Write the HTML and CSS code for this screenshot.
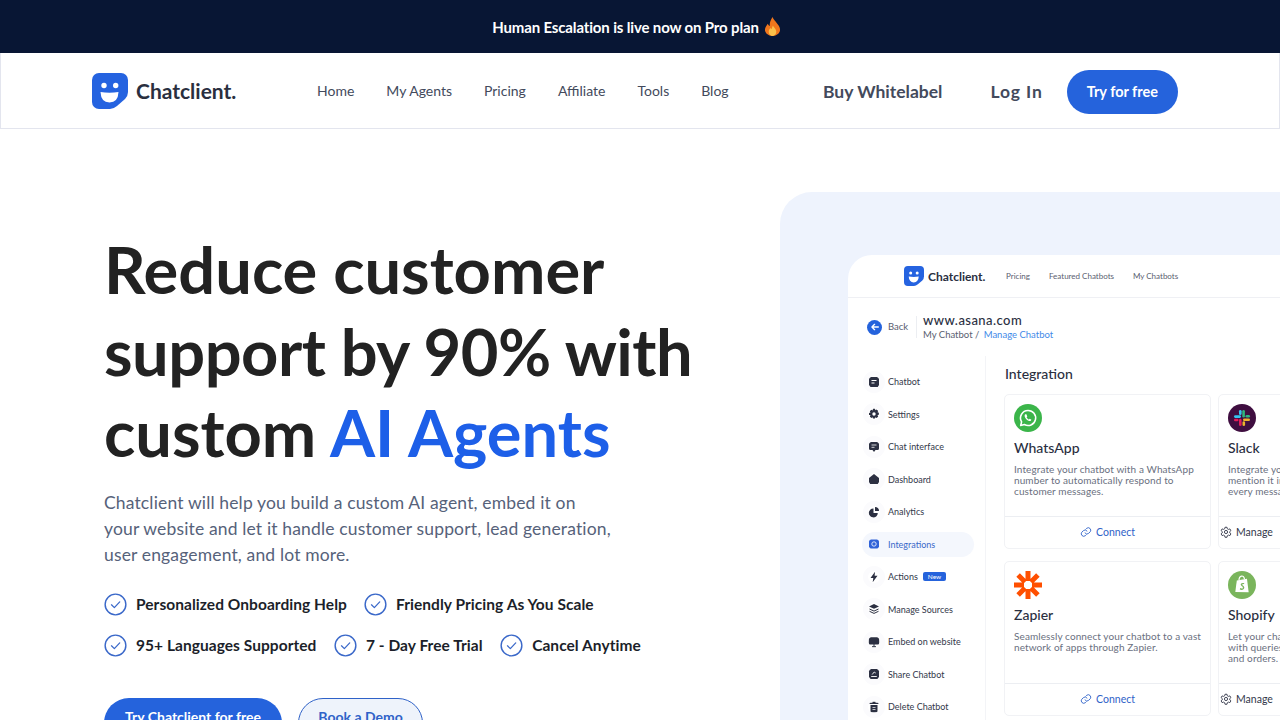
FILE: index.html
```html
<!DOCTYPE html>
<html lang="en">
<head>
    <meta charset="UTF-8">
    <meta name="viewport" content="width=device-width, initial-scale=1.0">
    <title>Chatclient</title>
    <link rel="stylesheet" href="styles.css">
</head>
<body>
    <svg class="sprite" width="0" height="0">
        <symbol id="logo" viewBox="0 0 36 36">
            <path fill="#2563e0" d="M7 0H29a7 7 0 0 1 7 7V19Q36 23 33 26L25 33Q21.500 36 18 36H7a7 7 0 0 1-7-7V7a7 7 0 0 1 7-7z"/>
            <circle cx="12" cy="12.500" r="2.700" fill="#fff"/>
            <circle cx="23.700" cy="12.500" r="2.700" fill="#fff"/>
            <path fill="#fff" d="M8.500 19Q17.500 20.500 26.500 19Q26 29.500 17.500 29.500Q9 29.500 8.500 19z"/>
        </symbol>
        <symbol id="check" viewBox="0 0 24 24">
            <circle cx="12" cy="12" r="10.800" fill="none" stroke="#3a68c9" stroke-width="1.500"/>
            <path d="M7.800 12.300l3 3 5.600-6" fill="none" stroke="#3a68c9" stroke-width="1.300" stroke-linecap="round" stroke-linejoin="round"/>
        </symbol>
        <symbol id="link" viewBox="0 0 24 24">
            <path d="M10 14a5 5 0 0 0 7.500.5l3-3a5 5 0 0 0-7-7l-1.700 1.700M14 10a5 5 0 0 0-7.500-.5l-3 3a5 5 0 0 0 7 7l1.700-1.700" fill="none" stroke="#2f62c8" stroke-width="1.800" stroke-linecap="round"/>
        </symbol>
        <symbol id="gear" viewBox="0 0 24 24">
            <circle cx="12" cy="12" r="3.200" fill="none" stroke="#33384a" stroke-width="1.800"/>
            <path d="M10 2.500h4l.6 3 2.300 1.300 2.900-1 2 3.400-2.300 2v2.600l2.300 2-2 3.400-2.900-1-2.300 1.300-.6 3h-4l-.6-3-2.300-1.300-2.900 1-2-3.400 2.300-2v-2.600l-2.300-2 2-3.400 2.900 1 2.300-1.300z" fill="none" stroke="#33384a" stroke-width="1.800" stroke-linejoin="round"/>
        </symbol>
    </svg>

    <div class="announce">
        Human Escalation is live now on Pro plan
        <svg class="fire" viewBox="0 0 18 20" width="17" height="19">
            <path fill="#f0761c" d="M9 0c1 3 3 4 5 7 2 2 3 4 3 6.500C17 17 13.500 20 9 20s-8-3-8-6.500C1 10.500 3 9 4 7c.5 1 1 2 2 2.500C6 6 7 3 9 0z"/>
            <path fill="#fbc14a" d="M9.500 9c.5 2 3.500 3.500 3.500 6.500 0 2.500-2 4.500-4 4.500s-4-2-4-4.500c0-2 1-3 2-4 .3.700.7 1 1.200 1.200C8.500 11 9 10 9.500 9z"/>
        </svg>
    </div>

    <header class="navbar">
        <a class="brand">
            <svg class="brand-logo"><use href="#logo"/></svg>
            <span>Chatclient.</span>
        </a>
        <nav class="nav-links">
            <a>Home</a>
            <a>My Agents</a>
            <a>Pricing</a>
            <a>Affiliate</a>
            <a>Tools</a>
            <a>Blog</a>
        </nav>
        <div class="nav-right">
            <a class="whitelabel">Buy Whitelabel</a>
            <a class="login">Log In</a>
            <a class="try-btn">Try for free</a>
        </div>
    </header>

    <main class="hero">
        <section class="hero-left">
            <h1>Reduce customer<br><span class="tight">support by 90% with</span><br>custom <span class="blue">AI Agents</span></h1>
            <p class="lead">Chatclient will help you build a custom AI agent, embed it on<br>your website and let it handle customer support, lead generation,<br>user engagement, and lot more.</p>
            <div class="perks">
                <div class="perk-row">
                    <div class="perk"><svg><use href="#check"/></svg>Personalized Onboarding Help</div>
                    <div class="perk"><svg><use href="#check"/></svg>Friendly Pricing As You Scale</div>
                </div>
                <div class="perk-row wide">
                    <div class="perk"><svg><use href="#check"/></svg>95+ Languages Supported</div>
                    <div class="perk"><svg><use href="#check"/></svg>7 - Day Free Trial</div>
                    <div class="perk"><svg><use href="#check"/></svg>Cancel Anytime</div>
                </div>
            </div>
            <div class="cta">
                <a class="cta-main">Try Chatclient for free</a>
                <a class="cta-alt">Book a Demo</a>
            </div>
        </section>

        <section class="panel">
            <div class="app">
                <div class="app-nav">
                    <svg class="app-logo"><use href="#logo"/></svg>
                    <span class="app-brand">Chatclient.</span>
                    <a>Pricing</a>
                    <a>Featured Chatbots</a>
                    <a>My Chatbots</a>
                </div>
                <div class="app-head">
                    <span class="back-dot">
                        <svg viewBox="0 0 12 12" width="10" height="10"><path d="M10 6H2.500M5.500 2.800L2.300 6l3.200 3.200" fill="none" stroke="#fff" stroke-width="1.600" stroke-linecap="round" stroke-linejoin="round"/></svg>
                    </span>
                    <span class="back-text">Back</span>
                    <div class="app-title">
                        <div class="site">www.asana.com</div>
                        <div class="crumbs">My Chatbot / <span>Manage Chatbot</span></div>
                    </div>
                </div>
                <div class="app-body">
                    <aside class="side">
                        <div class="side-item">
                            <svg viewBox="0 0 12 12"><path fill="#2c3042" d="M3 1h6a2 2 0 0 1 2 2v7a1 1 0 0 1-1 1H3a2 2 0 0 1-2-2V3a2 2 0 0 1 2-2z"/><path d="M3.500 4.500h5M3.500 7h3" stroke="#fff"/></svg>
                            Chatbot
                        </div>
                        <div class="side-item">
                            <svg viewBox="0 0 12 12"><path fill="#2c3042" fill-rule="evenodd" d="M5 .800h2l.4 1.400 1.300-.7 1.500 1.500-.7 1.300 1.400.4v2l-1.400.4.700 1.300-1.500 1.500-1.300-.7-.4 1.400H5l-.4-1.400-1.300.7-1.500-1.500.7-1.300L1 7V5l1.500-.4-.7-1.300L3.300 1.800l1.300.7zM6 4.300a1.700 1.700 0 1 0 0 3.400 1.700 1.700 0 0 0 0-3.400z"/></svg>
                            Settings
                        </div>
                        <div class="side-item">
                            <svg viewBox="0 0 12 12"><path fill="#2c3042" d="M2.500 1h7A1.500 1.500 0 0 1 11 2.500v5A1.500 1.500 0 0 1 9.500 9H7.500L6 11 4.500 9h-2A1.500 1.500 0 0 1 1 7.500v-5A1.500 1.500 0 0 1 2.500 1z"/><path d="M3.500 4h5M3.500 6.300h3" stroke="#fff" stroke-width=".8"/></svg>
                            Chat interface
                        </div>
                        <div class="side-item">
                            <svg viewBox="0 0 12 12"><path fill="#2c3042" d="M6 1l5 4v5a1 1 0 0 1-1 1H2a1 1 0 0 1-1-1V5z"/></svg>
                            Dashboard
                        </div>
                        <div class="side-item">
                            <svg viewBox="0 0 12 12"><path fill="#2c3042" d="M5.500 2.500v4.500h4.300A4.500 4.500 0 1 1 5.500 2.500z"/><path fill="#2c3042" d="M7 1a4 4 0 0 1 4 4H7z"/></svg>
                            Analytics
                        </div>
                        <div class="side-item active">
                            <svg viewBox="0 0 12 12"><rect x="1" y="1.500" width="10" height="9" rx="2" fill="#2f62d8"/><circle cx="6" cy="6" r="2.200" fill="none" stroke="#fff" stroke-width=".8"/></svg>
                            Integrations
                        </div>
                        <div class="side-item">
                            <svg viewBox="0 0 12 12"><path fill="#2c3042" d="M7 .800L2.500 7H5.300L4.700 11.200 9.500 4.800H6.600z"/></svg>
                            Actions <span class="new-tag">New</span>
                        </div>
                        <div class="side-item">
                            <svg viewBox="0 0 12 12"><path fill="#2c3042" d="M6 1l5 2.400-5 2.400-5-2.400z"/><path d="M1.500 6L6 8.100 10.500 6M1.500 8.300L6 10.400l4.500-2.100" fill="none" stroke="#2c3042"/></svg>
                            Manage Sources
                        </div>
                        <div class="side-item">
                            <svg viewBox="0 0 12 12"><rect x=".800" y="1.200" width="10.400" height="7.300" rx="1.500" fill="#2c3042"/><path d="M6 8v2.500M4 10.700h4" stroke="#2c3042"/></svg>
                            Embed on website
                        </div>
                        <div class="side-item">
                            <svg viewBox="0 0 12 12"><rect x="1" y="1" width="10" height="10" rx="2.200" fill="#2c3042"/><path d="M3.200 8.500h5.600M4.200 6.500l2-2.500 1.500 1" fill="none" stroke="#fff" stroke-width=".9"/></svg>
                            Share Chatbot
                        </div>
                        <div class="side-item">
                            <svg viewBox="0 0 12 12"><path fill="#2c3042" d="M4.500 .800h3v1h3v1.200h-9V1.800h3zM2.500 4h7v6a1.200 1.200 0 0 1-1.200 1.200H3.700A1.200 1.200 0 0 1 2.500 10z"/><path d="M4.500 6.500h3M4.500 8.500h3" stroke="#fff" stroke-width=".7"/></svg>
                            Delete Chatbot
                        </div>
                    </aside>
                    <div class="content">
                        <h2>Integration</h2>
                        <div class="cards">
                            <div class="card">
                                <div class="card-body">
                                    <svg class="card-icon" viewBox="0 0 28 28">
                                        <circle cx="14" cy="14" r="14" fill="#3bb54a"/>
                                        <path d="M14 6.500a7.500 7.500 0 0 0-6.400 11.400L6.700 21.500l3.700-1A7.500 7.500 0 1 0 14 6.500z" fill="none" stroke="#fff" stroke-width="1.600" stroke-linejoin="round"/>
                                        <path d="M11.300 10.300c-.8.600-.9 1.900-.2 3.200.9 1.700 2.500 3 4 3.500 1.100.3 2-.2 2.300-1.200l-1.700-1-.8.700c-1-.4-1.900-1.300-2.300-2.300l.7-.8-.9-2.100z" fill="#fff"/>
                                    </svg>
                                    <h3>WhatsApp</h3>
                                    <p>Integrate your chatbot with a WhatsApp<br>number to automatically respond to<br>customer messages.</p>
                                </div>
                                <div class="card-foot connect"><svg><use href="#link"/></svg>Connect</div>
                            </div>
                            <div class="card">
                                <div class="card-body">
                                    <svg class="card-icon" viewBox="0 0 28 28">
                                        <circle cx="14" cy="14" r="14" fill="#3f0e40"/>
                                        <rect x="6" y="11.300" width="7" height="2.600" rx="1.300" fill="#36c5f0"/>
                                        <rect x="11" y="6" width="2.600" height="5" rx="1.300" fill="#36c5f0"/>
                                        <rect x="14.300" y="6" width="2.600" height="7.500" rx="1.300" fill="#2eb67d"/>
                                        <rect x="17.500" y="11" width="4.500" height="2.600" rx="1.300" fill="#2eb67d"/>
                                        <rect x="15" y="14.400" width="7" height="2.600" rx="1.300" fill="#ecb22e"/>
                                        <rect x="14.500" y="17.300" width="2.600" height="4.700" rx="1.300" fill="#ecb22e"/>
                                        <rect x="11" y="14.700" width="2.600" height="7.300" rx="1.300" fill="#e01e5a"/>
                                        <rect x="6" y="14.700" width="4.500" height="2.600" rx="1.300" fill="#e01e5a"/>
                                    </svg>
                                    <h3>Slack</h3>
                                    <p>Integrate your chatbot with Slack,<br>mention it in channels and reply to<br>every message.</p>
                                </div>
                                <div class="card-foot manage"><svg><use href="#gear"/></svg>Manage</div>
                            </div>
                            <div class="card">
                                <div class="card-body">
                                    <svg class="card-icon" viewBox="0 0 28 28">
                                        <g stroke="#ff4f00" stroke-width="5">
                                            <path d="M0 14H10M18 14H28M14 0V10M14 18V28M4.100 4.100l7 7M16.900 16.900l7 7M23.900 4.100l-7 7M11.100 16.900l-7 7"/>
                                        </g>
                                    </svg>
                                    <h3>Zapier</h3>
                                    <p>Seamlessly connect your chatbot to a vast<br>network of apps through Zapier.</p>
                                </div>
                                <div class="card-foot connect"><svg><use href="#link"/></svg>Connect</div>
                            </div>
                            <div class="card">
                                <div class="card-body">
                                    <svg class="card-icon" viewBox="0 0 28 28">
                                        <circle cx="14" cy="14" r="14" fill="#7ab55c"/>
                                        <path d="M8.800 9.500L19 7.700l1.700 13.500L7.300 21z" fill="#fff"/>
                                        <path d="M11 9.300c0-5 5-6 5.500-1" fill="none" stroke="#fff" stroke-width="1.200"/>
                                        <path d="M16.300 12.300c-2-1-3.800 0-3.600 1.500.2 1.400 2.300 1.500 2.200 2.900-.1 1.100-1.600 1.100-2.700.4l-.4 1.400c1.800.9 4.500.4 4.500-1.900 0-1.800-2.100-2-2.100-3 0-.7 1-.8 1.800-.4z" fill="#7ab55c"/>
                                    </svg>
                                    <h3>Shopify</h3>
                                    <p>Let your chatbot help customers<br>with queries about your products<br>and orders.</p>
                                </div>
                                <div class="card-foot manage"><svg><use href="#gear"/></svg>Manage</div>
                            </div>
                        </div>
                    </div>
                </div>
            </div>
        </section>
    </main>
</body>
</html>
```

FILE: styles.css
```css
* {
    box-sizing: border-box;
}

html, body {
    height: 720px;
    overflow: hidden;
}

body {
    margin: 0;
    font-family: Lato, "Noto Sans", sans-serif;
    background-color: #ffffff;
    color: #222222;
}

.sprite {
    display: block;
}

.announce {
    height: 53px;
    padding-right: 7px;
    background-color: #081634;
    color: #ffffff;
    display: flex;
    align-items: center;
    justify-content: center;
    gap: 5px;
    font-size: 15px;
    font-weight: 700;
    letter-spacing: -0.15px;
}

.navbar {
    height: 76px;
    border: 1px solid #e3e5ee;
    border-top: none;
    display: flex;
    align-items: center;
    padding-left: 91px;
}

.brand {
    display: flex;
    align-items: center;
    gap: 8px;
    width: 225px;
    font-size: 21px;
    font-weight: 700;
    color: #2a2f3f;
}

.brand-logo {
    width: 36px;
    height: 36px;
}

.nav-links {
    display: flex;
    gap: 32px;
    width: 506px;
    font-size: 14px;
    color: #434a5c;
}

.nav-right {
    display: flex;
    align-items: center;
    color: #434a5c;
    font-size: 17.500px;
    font-weight: 700;
    padding-top: 2px;
}

.whitelabel {
    margin-right: 48px;
}

.login {
    margin-right: 24px;
    letter-spacing: 0.9px;
}

.try-btn {
    width: 111px;
    height: 44px;
    border-radius: 22px;
    background-color: #2563dc;
    color: #ffffff;
    font-size: 14.500px;
    display: flex;
    align-items: center;
    justify-content: center;
}

.hero {
    display: flex;
    height: 591px;
}

.hero-left {
    width: 780px;
    padding: 100px 0 0 104px;
}

h1 {
    margin: 0;
    font-size: 65px;
    line-height: 81.500px;
    font-weight: 700;
    white-space: nowrap;
    color: #222222;
}

.tight {
    letter-spacing: -0.5px;
}

.blue {
    color: #1d5fe8;
}

.lead {
    margin: 16px 0 0;
    font-size: 17.500px;
    line-height: 26px;
    letter-spacing: 0.15px;
    white-space: nowrap;
    color: #56627a;
}

.perks {
    margin-top: 25px;
    display: flex;
    flex-direction: column;
    gap: 18px;
}

.perk-row {
    display: flex;
    gap: 17px;
}

.perk-row.wide {
    gap: 17.500px;
}

.perk {
    display: flex;
    align-items: center;
    gap: 9px;
    font-size: 15.500px;
    font-weight: 700;
    letter-spacing: 0.05px;
    color: #1c1f2a;
    height: 23px;
}

.perk svg {
    width: 23px;
    height: 23px;
}

.cta {
    display: flex;
    gap: 16px;
    margin-top: 41px;
    font-size: 14px;
    font-weight: 700;
}

.cta-main {
    width: 178px;
    height: 50px;
    padding-top: 10px;
    border-radius: 25px;
    background-color: #2563dc;
    color: #ffffff;
    text-align: center;
}

.cta-alt {
    width: 125px;
    height: 50px;
    padding-top: 9px;
    border-radius: 25px;
    border: 1px solid #2f62c8;
    background-color: #eef3fb;
    color: #2f62c8;
    text-align: center;
}

.panel {
    flex: 1;
    margin-top: 63px;
    padding: 63px 0 0 68px;
    background-color: #eef3fd;
    border-top-left-radius: 32px;
    overflow: hidden;
}

.app {
    width: 560px;
    height: 500px;
    background-color: #ffffff;
    border-top-left-radius: 24px;
}

.app-nav {
    height: 43px;
    border-bottom: 1px solid #eff0f4;
    display: flex;
    align-items: center;
    padding-left: 56px;
    font-size: 8px;
    color: #5a6070;
}

.app-logo {
    width: 20px;
    height: 20px;
    margin-right: 4px;
}

.app-brand {
    font-size: 12px;
    font-weight: 700;
    color: #2a2f3f;
    width: 78px;
}

.app-nav a {
    margin-right: 19px;
}

.app-head {
    height: 58px;
    display: flex;
    align-items: center;
    padding-left: 19px;
}

.back-dot {
    width: 15px;
    height: 15px;
    border-radius: 50%;
    background-color: #2563dc;
    display: flex;
    align-items: center;
    justify-content: center;
}

.back-text {
    font-size: 9.500px;
    color: #5a6070;
    margin-left: 6px;
    width: 29px;
    height: 22px;
    line-height: 22px;
    border-right: 1px solid #eceef2;
}

.app-title {
    margin-left: 6px;
}

.site {
    font-size: 13px;
    font-weight: 500;
    letter-spacing: 0.45px;
    color: #2a2f3f;
    line-height: 16px;
}

.crumbs {
    font-size: 9.500px;
    color: #5a6070;
    line-height: 14px;
}

.crumbs span {
    color: #3f8ae8;
    margin-left: 2px;
}

.app-body {
    display: flex;
}

.side {
    width: 138px;
    height: 400px;
    border-right: 1px solid #f3f4f7;
    padding: 13px 0 0 14px;
}

.side-item {
    width: 112px;
    height: 25px;
    margin-bottom: 7.500px;
    display: flex;
    align-items: center;
    gap: 8px;
    padding-left: 6px;
    font-size: 9px;
    color: #33384a;
    border-radius: 13px;
}

.side-item svg {
    width: 12px;
    height: 12px;
    flex-shrink: 0;
    border-radius: 50%;
    box-shadow: 0 0 0 5px #fbfbfd;
}

.side-item.active {
    background-color: #f4f7fd;
    color: #3a68c9;
}

.side-item.active svg {
    box-shadow: none;
}

.new-tag {
    background-color: #2563dc;
    color: #ffffff;
    font-size: 6.500px;
    padding: 1px 5px;
    border-radius: 2px;
    margin-left: -3px;
}

.content {
    padding: 9px 0 0 19px;
    width: 420px;
}

h2 {
    margin: 0 0 12px;
    font-size: 14px;
    line-height: 17px;
    font-weight: 500;
    color: #2a2f3f;
}

.cards {
    display: grid;
    margin-left: -1px;
    grid-template-columns: 207px 207px;
    grid-auto-rows: 155px;
    gap: 12px 7px;
}

.card {
    border: 1px solid #f1f2f5;
    border-radius: 5px;
    display: flex;
    flex-direction: column;
    overflow: hidden;
}

.card-body {
    flex: 1;
    padding: 9px 9px 0 9px;
    overflow: hidden;
}

.card-icon {
    display: block;
    width: 28px;
    height: 28px;
}

h3 {
    margin: 7px 0 7px;
    font-size: 14px;
    line-height: 18px;
    font-weight: 500;
    color: #2a2f3f;
}

.card p {
    margin: 0;
    font-size: 10px;
    line-height: 11px;
    letter-spacing: 0.1px;
    white-space: nowrap;
    color: #6a7080;
}

.card-foot {
    height: 32px;
    border-top: 1px solid #eceef2;
    display: flex;
    align-items: center;
    font-size: 10.500px;
    gap: 4px;
    padding-bottom: 2px;
}

.card-foot svg {
    width: 12px;
    height: 12px;
}

.connect {
    justify-content: center;
    color: #2f62c8;
}

.manage {
    padding-left: 1px;
    color: #33384a;
}
```
